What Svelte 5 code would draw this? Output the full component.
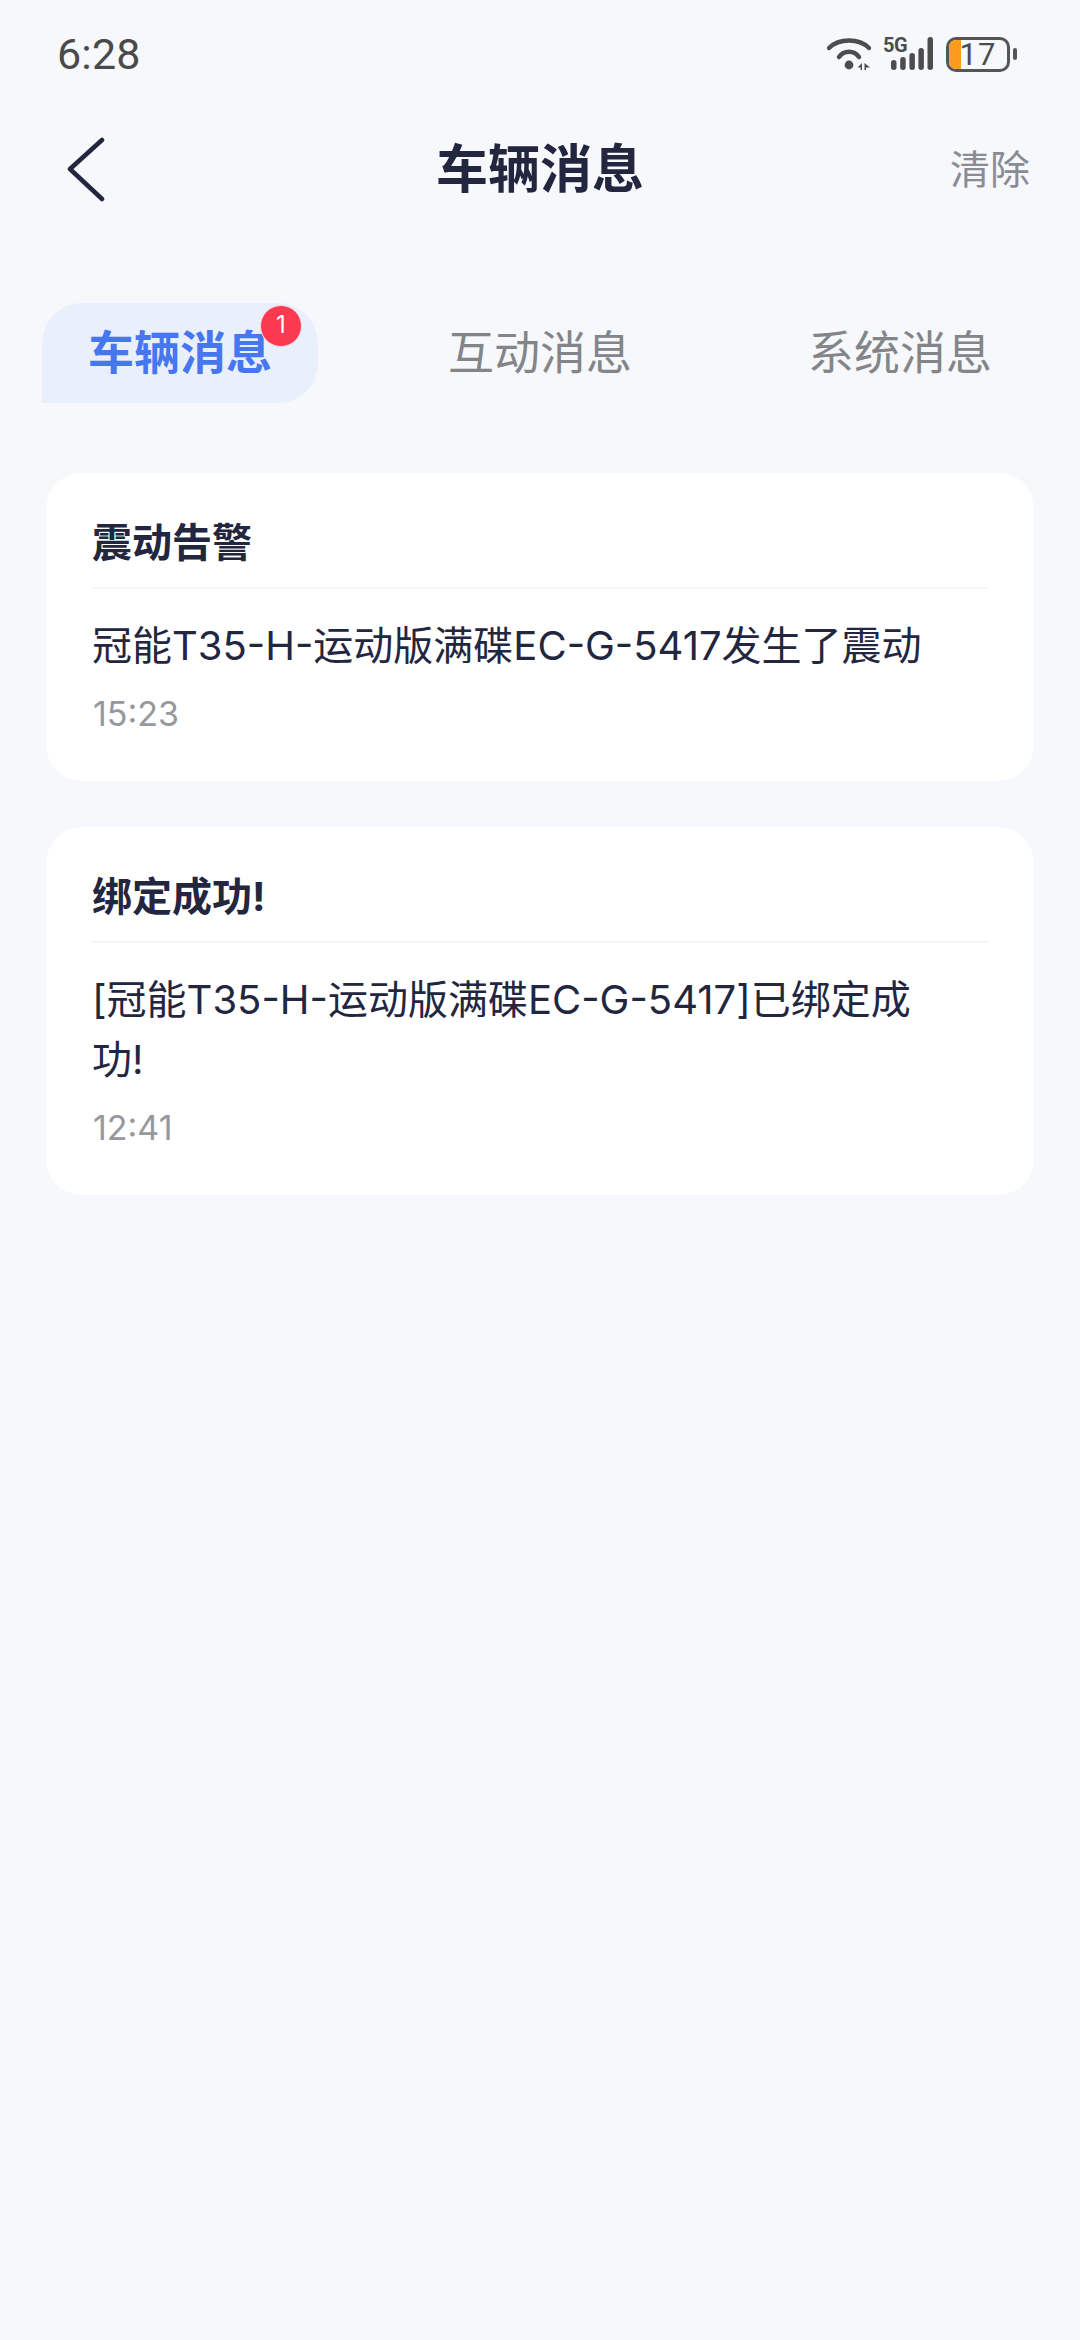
<script lang="ts">
	const tabs = [
		{ label: '车辆消息', active: true, badge: 1 },
		{ label: '互动消息', active: false, badge: 0 },
		{ label: '系统消息', active: false, badge: 0 }
	];

	const messages = [
		{ title: '震动告警', body: '冠能T35-H-运动版满碟EC-G-5417发生了震动', time: '15:23' },
		{ title: '绑定成功!', body: '[冠能T35-H-运动版满碟EC-G-5417]已绑定成功!', time: '12:41' }
	];
</script>

<div class="page">
	<div class="status-bar">
		<span class="clock">6:28</span>
		<div class="status-icons">
			<svg class="wifi" width="44" height="36" viewBox="0 0 44 36" fill="none" stroke="#4d4d4d" stroke-linecap="round">
				<path d="M2 12 C12 2 32 2 42 12" stroke-width="4.5" />
				<path d="M12 21 C17 14 27 14 32 21" stroke-width="4.5" />
				<circle cx="22" cy="29" r="4.4" fill="#4d4d4d" stroke="none" />
				<path d="M35 27 V34 H33.6 V31.6 H30.5 Z" fill="#4d4d4d" stroke="none" />
				<path d="M37.5 27 L43 31.6 H39 V34 H37.5 Z" fill="#4d4d4d" stroke="none" />
			</svg>
			<div class="signal">
				<span class="five-g">5G</span>
				<svg width="42" height="36" viewBox="0 0 42 36" fill="#4d4d4d">
					<rect x="0" y="24" width="5.5" height="10" rx="2.7" />
					<rect x="9.2" y="21" width="5.5" height="13" rx="2.7" />
					<rect x="18.4" y="17" width="5.5" height="17" rx="2.7" />
					<rect x="27.4" y="12" width="5.5" height="22" rx="2.7" />
					<rect x="36.5" y="1" width="5.5" height="33" rx="2.7" />
				</svg>
			</div>
			<div class="battery">
				<div class="battery-body">
					<div class="battery-fill"></div>
					<span class="battery-level">17</span>
				</div>
				<div class="battery-cap"></div>
			</div>
		</div>
	</div>

	<header class="nav">
		<svg class="back" width="40" height="66" viewBox="0 0 40 66" fill="none" stroke="#23263f" stroke-width="4.5" stroke-linecap="round" stroke-linejoin="round">
			<path d="M35 3 L3 32 L35 62" />
		</svg>
		<h1>车辆消息</h1>
		<span class="clear">清除</span>
	</header>

	<div class="tabs">
		{#each tabs as tab}
			<div class="tab" class:active={tab.active}>
				{tab.label}
				{#if tab.badge}
					<span class="badge">{tab.badge}</span>
				{/if}
			</div>
		{/each}
	</div>

	<div class="list">
		{#each messages as msg}
			<div class="card">
				<div class="card-title">{msg.title}</div>
				<div class="card-body">{msg.body}</div>
				<div class="card-time">{msg.time}</div>
			</div>
		{/each}
	</div>
</div>

<style>
	:global(body) {
		margin: 0;
		background: #f6f8fc;
	}

	.page {
		width: 1080px;
		height: 2340px;
		background: #f6f8fc;
		font-family: "Inter", "Noto Sans CJK SC", sans-serif;
		overflow: hidden;
	}

	.status-bar {
		height: 108px;
		display: flex;
		align-items: center;
		justify-content: space-between;
		padding: 0 63px 0 57px;
		box-sizing: border-box;
	}

	.clock {
		font-family: "Roboto", sans-serif;
		font-size: 43px;
		font-weight: 400;
		color: #4a4a4a;
		letter-spacing: 0.2px;
	}

	.status-icons {
		display: flex;
		align-items: center;
		gap: 12px;
	}

	.signal {
		position: relative;
		width: 50px;
		height: 36px;
		display: flex;
		justify-content: flex-end;
	}

	.five-g {
		position: absolute;
		left: 0;
		top: 0;
		font-family: "Roboto", sans-serif;
		font-size: 20px;
		font-weight: 700;
		letter-spacing: -0.5px;
		color: #4d4d4d;
		line-height: 18px;
	}

	.battery {
		display: flex;
		align-items: center;
		gap: 3px;
		margin-left: 1px;
	}

	.battery-body {
		position: relative;
		width: 64px;
		height: 35px;
		box-sizing: border-box;
		border: 3px solid #555;
		border-radius: 10px;
		display: flex;
		align-items: center;
		justify-content: center;
	}

	.battery-fill {
		position: absolute;
		left: 0;
		top: 0;
		bottom: 0;
		width: 12px;
		background: #fb9c1d;
		border-radius: 7px 0 0 7px;
	}

	.battery-level {
		position: relative;
		font-family: "Roboto", sans-serif;
		font-size: 31px;
		line-height: 29px;
		color: #4d4d4d;
		letter-spacing: 1px;
	}

	.battery-cap {
		width: 4px;
		height: 12px;
		background: #555;
		border-radius: 2px;
	}

	.nav {
		height: 120px;
		position: relative;
		display: flex;
		align-items: center;
		justify-content: center;
		box-sizing: border-box;
		padding-bottom: 6px;
	}

	.back {
		position: absolute;
		left: 67px;
		top: 29px;
	}

	h1 {
		margin: 0;
		font-size: 52px;
		font-weight: 700;
		color: #23263f;
	}

	.clear {
		position: absolute;
		right: 50px;
		top: 30px;
		font-size: 40px;
		color: #8a8c94;
	}

	.tabs {
		display: grid;
		grid-template-columns: repeat(3, 360px);
		justify-items: center;
		margin-top: 75px;
	}

	.tab {
		position: relative;
		width: 276px;
		height: 100px;
		box-sizing: border-box;
		padding-bottom: 8px;
		display: flex;
		align-items: center;
		justify-content: center;
		font-size: 46px;
		font-weight: 400;
		color: #838589;
	}

	.tab.active {
		background: #e9effb;
		color: #4676f0;
		font-weight: 700;
		border-radius: 40px 40px 40px 0;
	}

	.badge {
		position: absolute;
		top: 2px;
		right: 16px;
		width: 42px;
		height: 42px;
		border-radius: 50%;
		box-sizing: border-box;
		border: 1px solid #fbdde2;
		background: #fb3a52;
		color: #fff;
		font-size: 24px;
		font-weight: 400;
		display: flex;
		align-items: center;
		justify-content: center;
		padding-bottom: 4px;
	}

	.list {
		display: flex;
		flex-direction: column;
		gap: 46px;
		margin: 70px 46px 0;
	}

	.card {
		background: #fff;
		border-radius: 36px;
		padding: 0 46px 39px;
	}

	.card-title {
		height: 116px;
		box-sizing: border-box;
		padding-top: 40px;
		font-size: 40px;
		line-height: 60px;
		font-weight: 700;
		color: #23263f;
		border-bottom: 2px solid #f5f6f9;
	}

	.card-body {
		margin-top: 27px;
		font-size: 40px;
		line-height: 60px;
		color: #23263f;
		padding-right: 60px;
		word-break: break-all;
	}

	.card-time {
		margin-top: 10px;
		padding-left: 1px;
		font-size: 34px;
		line-height: 56px;
		color: #97989c;
	}
</style>
